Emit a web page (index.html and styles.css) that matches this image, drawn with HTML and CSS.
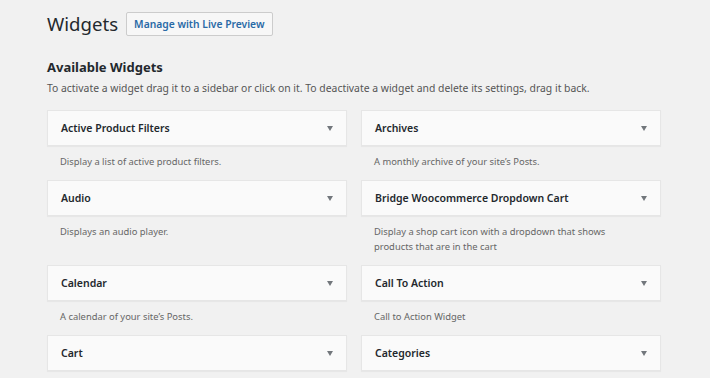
FILE: index.html
```html
<!DOCTYPE html>
<html>

<head>
    <title>Widgets</title>
    <link rel="stylesheet" href="styles.css">
</head>

<body>
    <div class="wrap">
        <div class="page-head">
            <h1>Widgets</h1>
            <a class="page-action" href="#">Manage with Live Preview</a>
        </div>

        <h2>Available Widgets</h2>
        <p class="intro">To activate a widget drag it to a sidebar or click on it. To deactivate a widget and delete its settings, drag it back.</p>

        <div class="widget-list">
            <div class="widget">
                <div class="widget-top"><span>Active Product Filters</span><i class="arrow"></i></div>
                <div class="widget-desc">Display a list of active product filters.</div>
            </div>
            <div class="widget">
                <div class="widget-top"><span>Archives</span><i class="arrow"></i></div>
                <div class="widget-desc">A monthly archive of your site’s Posts.</div>
            </div>
            <div class="widget">
                <div class="widget-top"><span>Audio</span><i class="arrow"></i></div>
                <div class="widget-desc">Displays an audio player.</div>
            </div>
            <div class="widget">
                <div class="widget-top"><span>Bridge Woocommerce Dropdown Cart</span><i class="arrow"></i></div>
                <div class="widget-desc">Display a shop cart icon with a dropdown that shows products that are in the cart</div>
            </div>
            <div class="widget">
                <div class="widget-top"><span>Calendar</span><i class="arrow"></i></div>
                <div class="widget-desc">A calendar of your site’s Posts.</div>
            </div>
            <div class="widget">
                <div class="widget-top"><span>Call To Action</span><i class="arrow"></i></div>
                <div class="widget-desc">Call to Action Widget</div>
            </div>
            <div class="widget">
                <div class="widget-top"><span>Cart</span><i class="arrow"></i></div>
                <div class="widget-desc"></div>
            </div>
            <div class="widget">
                <div class="widget-top"><span>Categories</span><i class="arrow"></i></div>
                <div class="widget-desc"></div>
            </div>
        </div>
    </div>
</body>
</html>
```

FILE: styles.css
```css
body {
    margin: 0;
    background-color: #f1f1f1;
    font-family: "Noto Sans", "Open Sans", sans-serif;
    color: #23282d;
}

.wrap {
    padding: 11px 0 0 47px;
    width: 614px;
}

.page-head {
    display: flex;
    align-items: center;
    gap: 8px;
}

h1 {
    margin: 0;
    font-size: 18.6px;
    font-weight: 400;
    line-height: 26px;
}

.page-action {
    display: inline-block;
    padding: 0 7px;
    height: 22px;
    line-height: 22px;
    font-size: 10.3px;
    font-weight: 600;
    color: #2a6aa6;
    text-decoration: none;
    background-color: #f7f7f7;
    border: 1px solid #ccc;
    border-radius: 2px;
}

h2 {
    margin: 21px 0 0;
    font-size: 13px;
    font-weight: 700;
    line-height: 18px;
}

.intro {
    margin: 5px 0 0;
    font-size: 10.4px;
    line-height: 15px;
    color: #555;
}

.widget-list {
    margin-top: 14px;
    display: grid;
    grid-template-columns: 300px 300px;
    column-gap: 14px;
}

.widget-top {
    display: flex;
    align-items: center;
    justify-content: space-between;
    height: 34px;
    padding: 0 13px;
    background-color: #fafafa;
    border: 1px solid #e6e6e6;
    box-shadow: 0 1px 1px rgba(0, 0, 0, 0.04);
    font-size: 10.5px;
    font-weight: 600;
}

.arrow {
    width: 0;
    height: 0;
    border-left: 3.5px solid transparent;
    border-right: 3.5px solid transparent;
    border-top: 5px solid #72777c;
}

.widget-desc {
    padding: 8px 40px 11px 13px;
    min-height: 15px;
    font-size: 9.4px;
    line-height: 15px;
    color: #666;
}
```
